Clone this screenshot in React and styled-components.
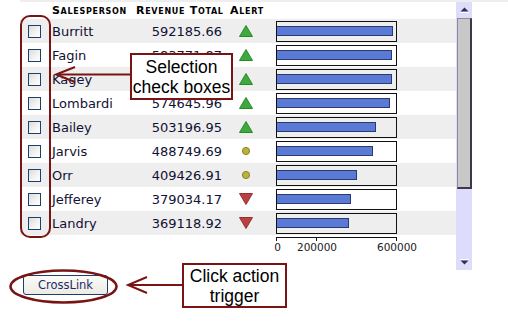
import React from "react";
import styled, { createGlobalStyle } from "styled-components";

const rows = [
  { name: "Burritt", revenue: 592185.66, alert: "up" },
  { name: "Fagin", revenue: 583771.87, alert: "up" },
  { name: "Kagey", revenue: 583001.23, alert: "up" },
  { name: "Lombardi", revenue: 574645.96, alert: "up" },
  { name: "Bailey", revenue: 503196.95, alert: "up" },
  { name: "Jarvis", revenue: 488749.69, alert: "mid" },
  { name: "Orr", revenue: 409426.91, alert: "mid" },
  { name: "Jefferey", revenue: 379034.17, alert: "down" },
  { name: "Landry", revenue: 369118.92, alert: "down" },
];

const SCALE = 120 / 600000;

const GlobalStyle = createGlobalStyle`
  body {
    margin: 0;
    background: #fff;
    font-family: "DejaVu Sans", Verdana, sans-serif;
  }
`;

const AlertIcon = ({ type }) => {
  if (type === "up")
    return (
      <svg width="14" height="12" viewBox="0 0 14 12">
        <polygon points="7,0.5 13.5,11.5 0.5,11.5" fill="#3eaa3e" stroke="#2a8a2a" strokeWidth="1" />
      </svg>
    );
  if (type === "down")
    return (
      <svg width="14" height="12" viewBox="0 0 14 12">
        <polygon points="0.5,0.5 13.5,0.5 7,11.5" fill="#b84242" stroke="#963030" strokeWidth="1" />
      </svg>
    );
  return (
    <svg width="14" height="12" viewBox="0 0 14 12">
      <circle cx="7" cy="6" r="3.6" fill="#b9b33a" stroke="#8a8528" strokeWidth="1" />
    </svg>
  );
};

const App = () => (
  <Page>
    <GlobalStyle />
    <TopStrip />
    <Panel>
      <Grid>
        <HeaderRow>
          <CheckCell />
          <NameCell>Salesperson</NameCell>
          <RevenueCell $header>Revenue Total</RevenueCell>
          <AlertCell $header>Alert</AlertCell>
          <ChartCell />
        </HeaderRow>
        {rows.map((r, i) => (
          <Row key={r.name} $odd={i % 2 === 0}>
            <CheckCell>
              <CheckBox />
            </CheckCell>
            <NameCell>{r.name}</NameCell>
            <RevenueCell>{r.revenue.toFixed(2)}</RevenueCell>
            <AlertCell>
              <AlertIcon type={r.alert} />
            </AlertCell>
            <ChartCell>
              <BarBox>
                <Bar style={{ width: Math.round(r.revenue * SCALE) - 2 }} />
              </BarBox>
            </ChartCell>
          </Row>
        ))}
        <AxisRow>
          <svg width="176" height="20" viewBox="0 0 176 20">
            <g stroke="#111" strokeWidth="1" fill="none">
              <line x1="6" y1="2.5" x2="126" y2="2.5" />
              <line x1="6.5" y1="2" x2="6.5" y2="6" />
              <line x1="46.5" y1="2" x2="46.5" y2="6" />
              <line x1="126.5" y1="2" x2="126.5" y2="6" />
            </g>
            <g fill="#222" fontSize="10.5" fontFamily="DejaVu Sans, Verdana, sans-serif" textAnchor="middle">
              <text x="7.5" y="16">0</text>
              <text x="47" y="16">200000</text>
              <text x="127" y="16">600000</text>
            </g>
          </svg>
        </AxisRow>
      </Grid>
      <ScrollBar>
        <ScrollArrow>
          <svg width="9" height="6" viewBox="0 0 9 6">
            <polygon points="4.5,0.5 8.5,4.5 0.5,4.5" fill="#2a3350" />
            <line x1="0" y1="5.5" x2="9" y2="5.5" stroke="#fff" />
          </svg>
        </ScrollArrow>
        <Thumb />
        <Track />
        <ScrollArrow>
          <svg width="9" height="6" viewBox="0 0 9 6">
            <line x1="0" y1="0.5" x2="9" y2="0.5" stroke="#fff" />
            <polygon points="0.5,1.5 8.5,1.5 4.5,5.5" fill="#2a3350" />
          </svg>
        </ScrollArrow>
      </ScrollBar>
    </Panel>
    <Footer>
      <ActionButton>CrossLink</ActionButton>
    </Footer>

    <Overlay width="508" height="323" viewBox="0 0 508 323">
      <g stroke="#7a1414" fill="none" strokeWidth="2">
        <rect x="21" y="16" width="29" height="221" rx="9" />
        <line x1="131" y1="74.5" x2="57" y2="74.5" />
        <polyline points="75,67 56,74.5 75,82" />
        <ellipse cx="63.5" cy="286.5" rx="53" ry="16" strokeWidth="2.5" />
        <line x1="182" y1="285" x2="129" y2="285" />
        <polyline points="147,277 128,285 147,293" />
      </g>
    </Overlay>
    <Callout style={{ left: 130, top: 53, width: 103, height: 47 }}>
      Selection
      <br />
      check boxes
    </Callout>
    <Callout style={{ left: 182, top: 263, width: 105, height: 45 }}>
      Click action
      <br />
      trigger
    </Callout>
  </Page>
);

export default App;

const Page = styled.div`
  position: relative;
  width: 508px;
  height: 323px;
  overflow: hidden;
`;

const TopStrip = styled.div`
  height: 2px;
  margin-left: 20px;
  background: #eeeeee;
`;

const Panel = styled.div`
  display: flex;
  margin-left: 20px;
  width: 452px;
  height: 268px;
`;

const Grid = styled.div`
  width: 436px;
  display: flex;
  flex-direction: column;
`;

const Row = styled.div`
  display: flex;
  align-items: center;
  height: 24px;
  background: ${(p) => (p.$odd ? "#eeeeee" : "#ffffff")};
  color: #111133;
  font-size: 13px;
`;

const HeaderRow = styled(Row)`
  height: 17px;
  background: #fff;
  color: #000;
  font-size: 11px;
  font-weight: bold;
  font-variant: small-caps;
  letter-spacing: 0.7px;
`;

const CheckCell = styled.div`
  width: 32px;
  display: flex;
  align-items: center;
  padding-left: 8px;
  box-sizing: border-box;
`;

const CheckBox = styled.div`
  width: 13px;
  height: 13px;
  box-sizing: border-box;
  border: 1px solid #1e3e6e;
  background: linear-gradient(135deg, #dcdcd8 0%, #f4f4f2 60%, #ffffff 100%);
`;

const NameCell = styled.div`
  width: 84px;
  white-space: nowrap;
`;

const RevenueCell = styled.div`
  width: 86px;
  white-space: nowrap;
  text-align: ${(p) => (p.$header ? "left" : "right")};
`;

const AlertCell = styled.div`
  width: 54px;
  box-sizing: border-box;
  padding-left: ${(p) => (p.$header ? "8px" : "17px")};
  display: flex;
  align-items: center;
`;

const ChartCell = styled.div`
  flex: 1;
  display: flex;
  align-items: center;
`;

const BarBox = styled.div`
  width: 121px;
  height: 21px;
  box-sizing: border-box;
  border: 1px solid #111;
  display: flex;
  align-items: center;
`;

const Bar = styled.div`
  height: 10px;
  box-sizing: border-box;
  background: #5a7ad6;
  border: 1px solid #2a3a70;
  border-left: none;
`;

const AxisRow = styled.div`
  display: flex;
  padding-left: 250px;
  height: 20px;
`;

const ScrollBar = styled.div`
  width: 16px;
  display: flex;
  flex-direction: column;
  background: #dddcfa;
`;

const ScrollArrow = styled.div`
  height: 16px;
  display: flex;
  align-items: center;
  justify-content: center;
`;

const Thumb = styled.div`
  height: 171px;
  margin: 0 0 0 1px;
  box-sizing: border-box;
  background: #c8c8c8;
  border-left: 1px solid #8a8aa0;
  border-top: 1px solid #8a8aa0;
  border-right: 2px solid #3a3a48;
  border-bottom: 2px solid #3a3a48;
`;

const Track = styled.div`
  flex: 1;
`;

const Footer = styled.div`
  padding: 4px 0 0 23px;
`;

const ActionButton = styled.button`
  width: 85px;
  height: 20px;
  padding: 0;
  border: 1px solid #1e3e6e;
  border-radius: 3px;
  background: linear-gradient(#fbfbf8, #ecebe4);
  color: #1e2a66;
  font-family: "DejaVu Sans", Verdana, sans-serif;
  font-size: 11.5px;
  cursor: pointer;
`;

const Overlay = styled.svg`
  position: absolute;
  left: 0;
  top: 0;
  pointer-events: none;
`;

const Callout = styled.div`
  position: absolute;
  box-sizing: border-box;
  border: 2px solid #7a1414;
  background: #fff;
  display: flex;
  align-items: center;
  justify-content: center;
  text-align: center;
  font-family: "Liberation Sans", Arial, sans-serif;
  font-size: 17.5px;
  line-height: 20px;
  color: #000;
`;
